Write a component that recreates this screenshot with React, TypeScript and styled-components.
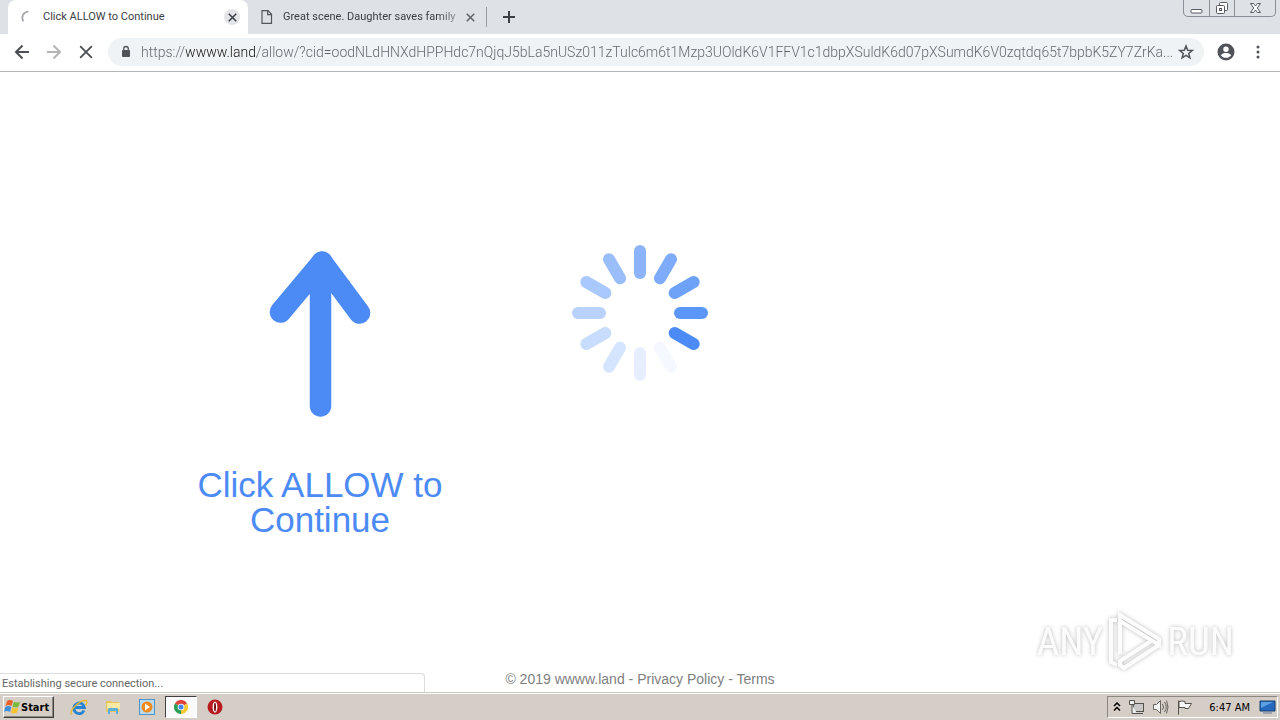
import React from "react";
import styled, { createGlobalStyle } from "styled-components";

const uiFont = '"DejaVu Sans Condensed", "DejaVu Sans", "Noto Sans", sans-serif';
const labelFont = 'Roboto, "Noto Sans", sans-serif';
const pageFont = '"Liberation Sans", Arial, sans-serif';

const GlobalStyle = createGlobalStyle`
  *, *::before, *::after { box-sizing: border-box; }
  body { margin: 0; background: #fff; font-family: ${uiFont}; }
  button { font: inherit; color: inherit; border: 0; padding: 0; margin: 0; background: none; cursor: pointer; }
  svg { display: block; flex: none; }
`;

const Screen = styled.div`
  display: flex;
  flex-direction: column;
  min-height: 100vh;
`;

const TabStrip = styled.header`
  display: flex;
  align-items: stretch;
  height: 34px;
  background: #dee1e6;
`;

const Tab = styled.div<{ $active?: boolean }>`
  display: flex;
  align-items: center;
  width: ${(p) => (p.$active ? "240px" : "238px")};
  padding: 0 8px 0 12px;
  margin-left: ${(p) => (p.$active ? "8px" : "0")};
  border-radius: 8px 8px 0 0;
  background: ${(p) => (p.$active ? "#fff" : "transparent")};
`;

const TabTitle = styled.span<{ $fade?: boolean }>`
  flex: 1;
  min-width: 0;
  margin: 0 4px 0 10px;
  white-space: nowrap;
  font-family: ${labelFont};
  font-size: 11px;
  line-height: 16px;
  color: #3c4043;
  ${(p) => p.$fade && "mask-image: linear-gradient(to right, #000 88%, #0006);"}
`;

const TabClose = styled.button<{ $round?: boolean }>`
  display: grid;
  place-items: center;
  width: 16px;
  height: 16px;
  border-radius: 50%;
  background: ${(p) => (p.$round ? "#e3e5e8" : "transparent")};
`;

const TabDivider = styled.span`
  align-self: center;
  width: 1px;
  height: 20px;
  margin-right: 14px;
  background: #9a9da1;
`;

const NewTab = styled.button`
  display: grid;
  place-items: center;
  width: 16px;
`;

const WindowControls = styled.div`
  display: flex;
  height: 17px;
  margin: 0 4px 0 auto;
  border: 1px solid #8a8e96;
  border-top: 0;
  border-radius: 0 0 5px 5px;
`;

const WindowButton = styled.button<{ $wide?: boolean }>`
  display: grid;
  place-items: center;
  width: ${(p) => (p.$wide ? "41px" : "25px")};
  & + & { border-left: 1px solid #8a8e96; }
`;

const Toolbar = styled.nav`
  display: flex;
  align-items: center;
  height: 38px;
  padding: 0 12px 1px;
  border-bottom: 1px solid #b4b6b8;
  background: #fff;
`;

const ToolButton = styled.button`
  display: grid;
  place-items: center;
  width: 20px;
  height: 28px;
  margin-right: 12px;
  &:last-child { margin-right: 0; }
`;

const AddressBar = styled.div`
  display: flex;
  flex: 1;
  align-items: center;
  min-width: 0;
  height: 28px;
  padding: 0 10px 0 12px;
  margin-right: 12px;
  border-radius: 14px;
  background: #f0f3f5;
`;

const AddressInput = styled.input`
  flex: 1;
  min-width: 0;
  height: 24px;
  margin: 0 2px 0 9px;
  padding: 0;
  border: 0;
  outline: 0;
  font-family: Roboto, "Noto Sans", sans-serif;
  font-weight: 300;
  font-size: 14px;
  color: transparent;
  background: linear-gradient(to right, #5f6368 45px, #111 45px, #111 116px, #5f6368 116px);
  background-clip: text;
  -webkit-background-clip: text;
`;

const Page = styled.main`
  position: relative;
  display: flex;
  flex: 1;
  flex-direction: column;
  font-family: ${pageFont};
`;

const Columns = styled.section`
  display: grid;
  flex: 1;
  grid-template-columns: repeat(3, 25%);
  justify-content: center;
  align-items: start;
  padding-top: 172px;
`;

const Prompt = styled.div`
  display: flex;
  flex-direction: column;
  align-items: center;
  padding-top: 6px;
`;

const PromptText = styled.h1`
  margin: 49px 0 0;
  font-size: 35px;
  line-height: 35px;
  font-weight: 400;
  text-align: center;
  color: #4c8bf5;
`;

const Spinner = styled.div`
  display: flex;
  justify-content: center;
`;

const Footer = styled.footer`
  padding-bottom: 4px;
  font-size: 14px;
  line-height: 18px;
  text-align: center;
  color: #808080;
  a { color: inherit; text-decoration: none; }
`;

const LoadStatus = styled.div`
  position: absolute;
  left: 0;
  bottom: 0;
  width: 425px;
  height: 19px;
  padding-left: 2px;
  border: 1px solid #dcdcdc;
  border-width: 1px 1px 0 0;
  border-radius: 0 4px 0 0;
  background: #fff;
  font-family: ${labelFont};
  font-size: 11px;
  line-height: 19px;
  color: #666;
`;

const Watermark = styled.div`
  position: absolute;
  right: 46px;
  bottom: 18px;
  display: flex;
  align-items: center;
  gap: 4px;
  filter: drop-shadow(0 0 2px #bbb);
`;

const WatermarkWord = styled.span`
  font-family: "Roboto Condensed", "Open Sans Condensed", "Liberation Sans", sans-serif;
  font-size: 39px;
  line-height: 64px;
  color: #fcfcfc;
`;

const Taskbar = styled.footer`
  display: flex;
  align-items: center;
  height: 28px;
  padding: 1px 2px 0 3px;
  border-top: 1px solid #c9c9c0;
  box-shadow: inset 0 1px #fff;
  background: #d5cec6;
`;

const StartButton = styled.button`
  display: flex;
  align-items: center;
  width: 51px;
  height: 22px;
  margin-right: 9px;
  border: 1px solid;
  border-color: #fff #404040 #404040 #fff;
  box-shadow: inset -1px -1px #8c8880;
  font-size: 11px;
  font-weight: 700;
  color: #000;
`;

const TaskButton = styled.button<{ $pressed?: boolean }>`
  display: grid;
  place-items: center;
  width: 32px;
  height: 22px;
  margin-right: 2px;
  border: 1px solid;
  border-color: ${(p) => (p.$pressed ? "#404040 #fff #fff #404040" : "transparent")};
  background: ${(p) => (p.$pressed ? "#fbfafa" : "transparent")};
`;

const Tray = styled.div`
  display: flex;
  align-items: center;
  gap: 7px;
  height: 22px;
  margin-left: auto;
  padding: 0 1px 0 5px;
  border: 1px solid;
  border-color: #8c8880 #fff #fff #8c8880;
  font-size: 11px;
  color: #000;
`;

const Clock = styled.time`
  margin: 0 2px 0 9px;
  white-space: nowrap;
`;

const Cross = ({ size, color, weight }: { size: number; color: string; weight: number }) => (
  <svg width={size} height={size} viewBox="0 0 12 12" fill="none" stroke={color} strokeWidth={weight}>
    <path d="M1 1l10 10M11 1L1 11" />
  </svg>
);

const spokes = ["#5b97f8", "#4c8bf5", "#f5f9ff", "#e6eeff", "#d6e5ff", "#c8dcfd", "#b9d2fb", "#a9c8fb", "#9abefa", "#8cb4fb", "#7eabfa", "#6ea2f9"];

const address =
  "https://wwww.land/allow/?cid=oodNLdHNXdHPPHdc7nQjqJ5bLa5nUSz011zTulc6m6t1Mzp3UOldK6V1FFV1c1dbpXSuldK6d07pXSumdK6V0zqtdq65t7bpbK5ZY7ZrKa...";

export default function App() {
  return (
    <Screen>
      <GlobalStyle />
      <TabStrip>
        <Tab $active>
          <svg width="13" height="16" viewBox="0 0 13 16" fill="none" stroke="#a3a5a8" strokeWidth="1.700">
            <path d="M8.500 2.500C3 3 1 7.500 3.200 12.500" />
          </svg>
          <TabTitle>Click ALLOW to Continue</TabTitle>
          <TabClose $round aria-label="Close tab"><Cross size={9} color="#3c4043" weight={2} /></TabClose>
        </Tab>
        <Tab>
          <svg width="13" height="16" viewBox="0 0 13 16" fill="none" stroke="#54585d" strokeWidth="1.2">
            <path d="M2 1.7h6l3.5 3.6v9H2zM7.6 1.7v4h4" />
          </svg>
          <TabTitle $fade>Great scene. Daughter saves family</TabTitle>
          <TabClose aria-label="Close tab"><Cross size={9} color="#5f6368" weight={2} /></TabClose>
        </Tab>
        <TabDivider />
        <NewTab aria-label="New tab">
          <svg width="12" height="12" viewBox="0 0 12 12" stroke="#3c4043" strokeWidth="2"><path d="M6 0v12M0 6h12" /></svg>
        </NewTab>
        <WindowControls>
          <WindowButton aria-label="Minimize">
            <svg width="13" height="14" viewBox="0 0 13 14"><rect x="1" y="8.5" width="11" height="3.5" rx="1" fill="#fff" stroke="#555962" /></svg>
          </WindowButton>
          <WindowButton aria-label="Restore">
            <svg width="14" height="14" viewBox="0 0 14 14" fill="#fff" stroke="#555962">
              <rect x="4.5" y="1.5" width="8" height="8" rx="1" /><rect x="1.5" y="4.5" width="8" height="8" rx="1" /><rect x="4.5" y="7.5" width="2" height="2" />
            </svg>
          </WindowButton>
          <WindowButton $wide aria-label="Close window">
            <svg width="13" height="12" viewBox="0 0 13 12" fill="#fff" stroke="#555962">
              <path d="M1.5 1.5h3L6.5 4l2-2.500h3L8.300 6l3.200 4.500h-3L6.500 8l-2 2.500h-3L4.700 6z" />
            </svg>
          </WindowButton>
        </WindowControls>
      </TabStrip>
      <Toolbar>
        <ToolButton aria-label="Back">
          <svg width="16" height="16" viewBox="0 0 16 16" fill="none" stroke="#4b4f53" strokeWidth="2"><path d="M15 8H2M8.500 1.500L2 8l6.500 6.500" /></svg>
        </ToolButton>
        <ToolButton aria-label="Forward">
          <svg width="16" height="16" viewBox="0 0 16 16" fill="none" stroke="#b2b4b6" strokeWidth="2"><path d="M1 8h13M7.500 1.500L14 8l-6.500 6.500" /></svg>
        </ToolButton>
        <ToolButton aria-label="Stop loading"><Cross size={14} color="#4b4f53" weight={1.6} /></ToolButton>
        <AddressBar>
          <svg width="12" height="14" viewBox="0 0 12 14">
            <rect x="2" y="5" width="8" height="7" rx="1" fill="#505459" /><path d="M3.700 5.500V3.800a2.300 2.300 0 0 1 4.600 0v1.700" fill="none" stroke="#505459" strokeWidth="1.300" />
          </svg>
          <AddressInput aria-label="Address" type="text" spellCheck={false} defaultValue={address} />
          <svg width="16" height="16" viewBox="0 0 16 16" fill="none" stroke="#505459" strokeWidth="1.500">
            <path d="M8 2l1.700 4.200 4.500.3-3.500 2.900 1.200 4.400L8 11.400l-3.900 2.400 1.200-4.400-3.500-2.900 4.500-.3z" />
          </svg>
        </AddressBar>
        <ToolButton aria-label="Profile">
          <svg width="18" height="18" viewBox="0 0 18 18">
            <circle cx="9" cy="9" r="8.500" fill="#505459" /><circle cx="9" cy="6.300" r="2.700" fill="#fff" /><path d="M3.800 12.200c1-1.600 3.200-2.200 5.200-2.200s4.200.6 5.200 2.200C13 13.800 11 14.800 9 14.800s-4-1-5.200-2.600z" fill="#fff" />
          </svg>
        </ToolButton>
        <ToolButton aria-label="Menu">
          <svg width="4" height="14" viewBox="0 0 4 14" fill="#505459"><circle cx="2" cy="2" r="1.500" /><circle cx="2" cy="7" r="1.500" /><circle cx="2" cy="12" r="1.500" /></svg>
        </ToolButton>
      </Toolbar>
      <Page>
        <Columns>
          <Prompt>
            <svg width="102" height="168" viewBox="0 0 102 168" fill="none" stroke="#4c8bf5" strokeWidth="21.500" strokeLinecap="round" strokeLinejoin="round">
              <path d="M51.500 156V30M11.500 62L53 12.500 90.500 63" />
              <path d="M53 12L50 34 55 34z" />
            </svg>
            <PromptText>Click ALLOW to Continue</PromptText>
          </Prompt>
          <Spinner>
            <svg width="138" height="138" viewBox="-69 -69 138 138" role="img" aria-label="Loading">
              {spokes.map((color, i) => (
                <rect key={i} x="34" y="-6" width="34" height="12" rx="6" fill={color} transform={`rotate(${i * 30})`} />
              ))}
            </svg>
          </Spinner>
        </Columns>
        <Footer>
          © 2019 wwww.land - <a href="#privacy">Privacy Policy</a> - <a href="#terms">Terms</a>
        </Footer>
        <LoadStatus role="status">Establishing secure connection...</LoadStatus>
        <Watermark>
          <WatermarkWord>ANY</WatermarkWord>
          <svg width="56" height="64" viewBox="0 0 56 64" fill="none" stroke="#fcfcfc" strokeWidth="4">
            <path d="M10 10H4v42l6 3" />
            <path d="M13 44V5l39 24v6L13 11" />
            <path d="M52 35L17 58l-4-3V51L44 31" />
          </svg>
          <WatermarkWord>RUN</WatermarkWord>
        </Watermark>
      </Page>
      <Taskbar>
        <StartButton>
          <svg width="17" height="16" viewBox="0 0 17 16">
            <path d="M3 2q3-2 6 0L7.500 7q-3-2-6 0z" fill="#e8622a" /><path d="M10 2.500q3 2 6 0L14.500 7.500q-3 2-6 0z" fill="#7cba3c" />
            <path d="M1.300 8q3-2 6 0L6 13q-3-2-6 0z" fill="#3f8fdb" /><path d="M8.200 8.500q3 2 6 0L13 13.500q-3 2-6 0z" fill="#f6c32d" />
          </svg>
          Start
        </StartButton>
        <TaskButton aria-label="Internet Explorer">
          <svg width="18" height="17" viewBox="0 0 18 17" fill="none">
            <path d="M14 11.500a5.300 5.300 0 1 1 .4-3H5" stroke="#2583d3" strokeWidth="2.800" /><path d="M1.500 15.500C-1 12 9 1 16 1.500c2 .5.500 4-.5 5" stroke="#e9b92c" strokeWidth="1.300" />
          </svg>
        </TaskButton>
        <TaskButton aria-label="Explorer">
          <svg width="16" height="16" viewBox="0 0 16 16">
            <path d="M1 2h5l1 1h7v10H1z" fill="#e6c65c" /><path d="M2 4h13v6H2z" fill="#f8e9a2" /><path d="M3 15v-5q0-1 1-1h8q1 0 1 1v5h-2v-3H5v3z" fill="#60afd9" />
          </svg>
        </TaskButton>
        <TaskButton aria-label="Media Player">
          <svg width="16" height="16" viewBox="0 0 16 16">
            <rect x="0.500" y="0.500" width="15" height="15" fill="#b9dbf2" stroke="#4f93c7" /><circle cx="8" cy="8" r="5.500" fill="#f18a1d" /><path d="M6 4.500v7l5-3.500z" fill="#fff" />
          </svg>
        </TaskButton>
        <TaskButton $pressed aria-label="Chrome">
          <svg width="14" height="14" viewBox="0 0 14 14">
            <path d="M7 7L.9 3.500A7 7 0 0 1 13.100 3.500z" fill="#dc4437" /><path d="M7 7l6.100-3.500A7 7 0 0 1 7 14z" fill="#f8c933" /><path d="M7 7v7A7 7 0 0 1 .9 3.500z" fill="#2d9c55" />
            <circle cx="7" cy="7" r="3.300" fill="#fff" /><circle cx="7" cy="7" r="2.500" fill="#4385f0" />
          </svg>
        </TaskButton>
        <TaskButton aria-label="Opera">
          <svg width="16" height="16" viewBox="0 0 16 16"><circle cx="8" cy="8" r="7.500" fill="#b81a20" /><ellipse cx="8" cy="8" rx="2.400" ry="5.500" fill="#fff" /><ellipse cx="8" cy="8" rx="1" ry="4.500" fill="#7a1014" /></svg>
        </TaskButton>
        <Tray>
          <svg width="8" height="10" viewBox="0 0 8 10" fill="none" stroke="#000" strokeWidth="1.500"><path d="M1 4l3-3 3 3M1 8.500l3-3 3 3" /></svg>
          <svg width="17" height="16" viewBox="0 0 17 16" fill="#eee" stroke="#55524d">
            <rect x="5.500" y="4.500" width="10" height="8" fill="#c8c8c8" /><path d="M1.500 1.500h5v4h-5zM4 5.500v9h5M7 14.500h8" />
          </svg>
          <svg width="17" height="16" viewBox="0 0 17 16" fill="#f4f4f4" stroke="#68645f">
            <path d="M1.500 5.500h3l4-4v13l-4-4h-3z" /><path d="M10.500 5q2 3 0 6M12.500 3q3.500 5 0 10M14.500 1.500q3 6.500 0 13" fill="none" />
          </svg>
          <svg width="17" height="16" viewBox="0 0 17 16" fill="#f7f7f7" stroke="#55524d"><path d="M2.500 1.500v14M3 2.500q3-1 6 0v2h6.500l-3 5H9v-1H3z" /></svg>
          <Clock>6:47 AM</Clock>
          <svg width="17" height="14" viewBox="0 0 17 14"><path d="M1 1h15v10H1z" fill="#2568be" stroke="#17406f" /><path d="M2 2h12L2 8z" fill="#5ba0e5" /><path d="M4 13h9" stroke="#607b9b" /></svg>
        </Tray>
      </Taskbar>
    </Screen>
  );
}
